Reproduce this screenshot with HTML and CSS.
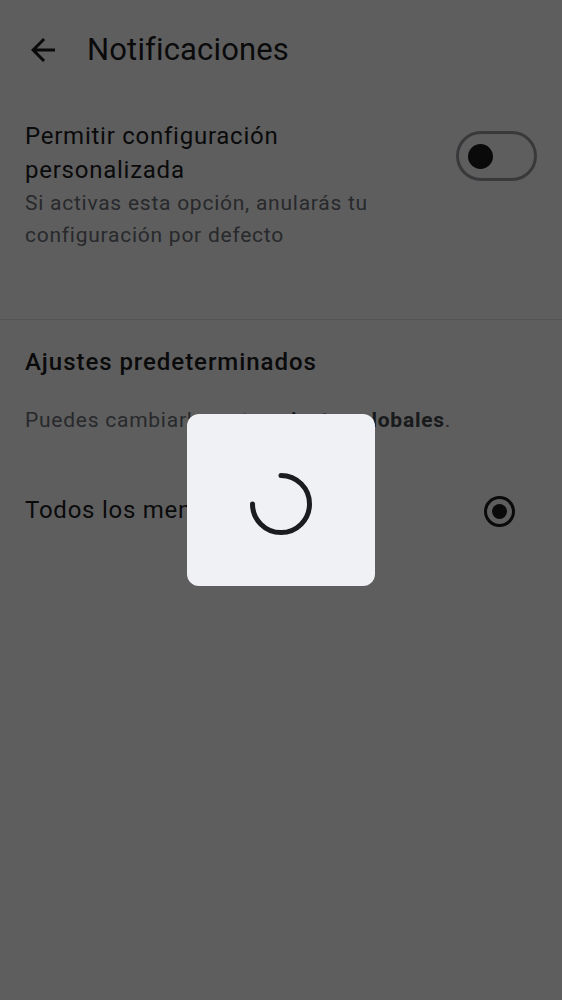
FILE: index.html
```html
<!DOCTYPE html>
<html lang="es">
<head>
<meta charset="utf-8">
<title>Notificaciones</title>
<link rel="stylesheet" href="styles.css">
</head>
<body>
<div class="page">
  <header class="topbar">
    <svg class="back" viewBox="0 0 24 24" width="36" height="36" aria-hidden="true"><path d="M20 11H7.83l5.59-5.59L12 4l-8 8 8 8 1.41-1.41L7.83 13H20v-2z"/></svg>
    <h1 class="title">Notificaciones</h1>
  </header>

  <section class="custom">
    <div class="custom-text">
      <p class="item-title">Permitir configuración personalizada</p>
      <p class="item-sub">Si activas esta opción, anularás tu configuración por defecto</p>
    </div>
    <div class="switch"><span class="knob"></span></div>
  </section>

  <hr class="divider">

  <section class="defaults">
    <h2 class="section-title">Ajustes predeterminados</h2>
    <p class="item-sub">Puedes cambiarlo en tus <b>ajustes globales</b>.</p>
    <div class="radio-row">
      <span class="radio-label">Todos los mensajes</span>
      <span class="radio"><span class="dot"></span></span>
    </div>
  </section>
</div>

<div class="scrim">
  <div class="dialog">
    <svg class="spinner" viewBox="0 0 62 62" width="62" height="62" aria-hidden="true"><path d="M31 2.5A28.5 28.5 0 1 1 2.5 31"/></svg>
  </div>
</div>
</body>
</html>
```

FILE: styles.css
```css
html, body {
  margin: 0;
  padding: 0;
  background: #ffffff;
}

body {
  font-family: Roboto, "Noto Sans", "Liberation Sans", sans-serif;
  color: #1b1b1f;
}

.page {
  min-height: 1000px;
}

.topbar {
  height: 100px;
  display: flex;
  align-items: center;
  padding-left: 25px;
}

.back {
  fill: #1b1b1f;
  flex: none;
}

.title {
  margin: 0 0 0 26px;
  font-size: 31px;
  font-weight: 400;
  line-height: 38px;
  letter-spacing: 0.15px;
}

.custom {
  display: flex;
  align-items: flex-start;
  padding: 19px 25px 68px 25px;
}

.custom-text {
  flex: 1;
  max-width: 380px;
}

.item-title {
  margin: 0;
  font-size: 24px;
  line-height: 34px;
  letter-spacing: 0.75px;
}

.item-sub {
  margin: 0;
  font-size: 21px;
  line-height: 32px;
  letter-spacing: 0.75px;
  color: #6c6f77;
}

.item-sub b {
  font-weight: 700;
  color: #44474e;
}

.switch {
  flex: none;
  margin-left: auto;
  margin-top: 12px;
  width: 81px;
  height: 50px;
  box-sizing: border-box;
  border: 3px solid #9a9ca4;
  border-radius: 25px;
  display: flex;
  align-items: center;
  padding-left: 9px;
}

.knob {
  width: 25px;
  height: 25px;
  border-radius: 50%;
  background: #1b1b1f;
}

.divider {
  margin: 0;
  border: 0;
  height: 1px;
  background: #e2e2e6;
}

.defaults {
  padding: 25px 25px 0 25px;
}

.section-title {
  margin: 0 0 25px 0;
  font-size: 24px;
  font-weight: 500;
  line-height: 34px;
  letter-spacing: 0.95px;
}

.radio-row {
  display: flex;
  align-items: center;
  margin-top: 56px;
  padding-right: 22px;
}

.radio-label {
  font-size: 24px;
  line-height: 36px;
  letter-spacing: 0.75px;
}

.radio {
  margin-left: auto;
  margin-top: 2px;
  width: 31px;
  height: 31px;
  box-sizing: border-box;
  border: 3px solid #1b1b1f;
  border-radius: 50%;
  display: flex;
  align-items: center;
  justify-content: center;
}

.dot {
  width: 15px;
  height: 15px;
  border-radius: 50%;
  background: #1b1b1f;
}

.scrim {
  position: fixed;
  inset: 0;
  background: rgba(0, 0, 0, 0.63);
  display: flex;
  align-items: center;
  justify-content: center;
}

.dialog {
  width: 188px;
  height: 172px;
  border-radius: 12px;
  background: #f0f1f5;
  display: flex;
  align-items: center;
  justify-content: center;
}

.spinner {
  margin-top: 7px;
  fill: none;
  stroke: #1b1c20;
  stroke-width: 5;
  stroke-linecap: round;
}
```
